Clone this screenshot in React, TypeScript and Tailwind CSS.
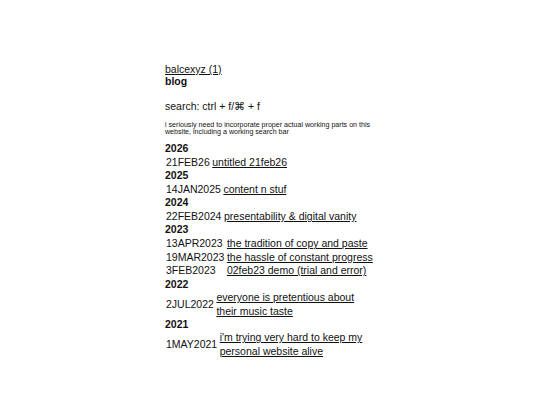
import React from 'react';

type Post = { date: string; title: string };
type Year = { year: string; posts: Post[] };

const years: Year[] = [
  { year: '2026', posts: [{ date: '21FEB26', title: 'untitled 21feb26' }] },
  { year: '2025', posts: [{ date: '14JAN2025', title: 'content n stuf' }] },
  { year: '2024', posts: [{ date: '22FEB2024', title: 'presentability & digital vanity' }] },
  {
    year: '2023',
    posts: [
      { date: '13APR2023', title: 'the tradition of copy and paste' },
      { date: '19MAR2023', title: 'the hassle of constant progress' },
      { date: '3FEB2023', title: '02feb23 demo (trial and error)' },
    ],
  },
  { year: '2022', posts: [{ date: '2JUL2022', title: 'everyone is pretentious about their music taste' }] },
  { year: '2021', posts: [{ date: '1MAY2021', title: "i'm trying very hard to keep my personal website alive" }] },
];

export default function App() {
  return (
    <div className="min-h-[405px] bg-white text-[#111] font-['Liberation_Sans',Arial,sans-serif]">
      <div className="mx-auto w-[210px] pt-[63px] text-[10.5px]">
        <a href="#" className="block leading-[12px] underline">
          balcexyz (1)
        </a>
        <div className="font-bold leading-[12px]">blog</div>

        <div className="mt-[13px] leading-[12px]">search: ctrl + f/⌘ + f</div>

        <p className="mt-[10px] text-[7.1px] leading-[7.2px]">
          i seriously need to incorporate proper actual working parts on this website, including a working search bar
        </p>

        <div className="mt-[5.5px]">
          {years.map((y) => (
            <section key={y.year}>
              <h2 className="font-bold leading-[13.6px]">{y.year}</h2>
              <table className="w-full">
                <tbody>
                  {y.posts.map((p) => (
                    <tr key={p.date}>
                      <td className="w-px whitespace-nowrap pl-[1px] pr-[2.5px] align-middle leading-[13.6px]">
                        {p.date}
                      </td>
                      <td className="align-middle leading-[13.2px]">
                        <a href="#" className="underline">
                          {p.title}
                        </a>
                      </td>
                    </tr>
                  ))}
                </tbody>
              </table>
            </section>
          ))}
        </div>
      </div>
    </div>
  );
}
